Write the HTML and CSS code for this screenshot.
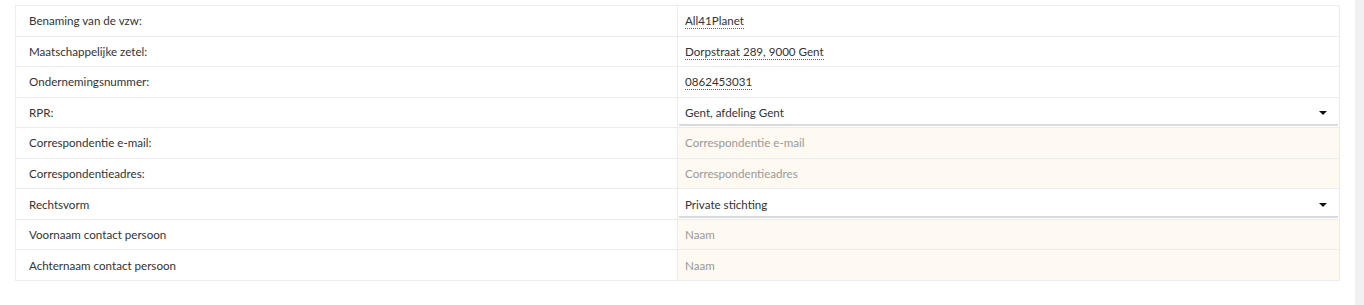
FILE: index.html
```html
<!DOCTYPE html>
<html lang="nl">
<head>
  <meta charset="UTF-8" />
  <meta name="viewport" content="width=device-width, initial-scale=1.0"/>
  <title>Gegevens vzw</title>
  <link rel="stylesheet" href="styles.css">
</head>
<body>

  <div class="page">
    <!-- Gegevens tabel -->
    <div class="content">
      <table class="info-table">
        <tr>
          <td class="label">Benaming van de vzw:</td>
          <td class="value"><span class="editable">All41Planet</span></td>
        </tr>
        <tr>
          <td class="label">Maatschappelijke zetel:</td>
          <td class="value"><span class="editable">Dorpstraat 289, 9000 Gent</span></td>
        </tr>
        <tr>
          <td class="label">Ondernemingsnummer:</td>
          <td class="value"><span class="editable">0862453031</span></td>
        </tr>
        <tr>
          <td class="label">RPR:</td>
          <td class="value select-cell">
            <div class="select-box">
              <span>Gent, afdeling Gent</span>
              <span class="caret"></span>
            </div>
          </td>
        </tr>
        <tr>
          <td class="label">Correspondentie e-mail:</td>
          <td class="value input-cell"><span class="placeholder">Correspondentie e-mail</span></td>
        </tr>
        <tr>
          <td class="label">Correspondentieadres:</td>
          <td class="value input-cell"><span class="placeholder">Correspondentieadres</span></td>
        </tr>
        <tr>
          <td class="label">Rechtsvorm</td>
          <td class="value select-cell">
            <div class="select-box">
              <span>Private stichting</span>
              <span class="caret"></span>
            </div>
          </td>
        </tr>
        <tr>
          <td class="label">Voornaam contact persoon</td>
          <td class="value input-cell"><span class="placeholder">Naam</span></td>
        </tr>
        <tr>
          <td class="label">Achternaam contact persoon</td>
          <td class="value input-cell"><span class="placeholder">Naam</span></td>
        </tr>
      </table>
    </div>

    <!-- scrollbalk -->
    <div class="scroll-track"></div>
  </div>

</body>
</html>
```

FILE: styles.css
```css
* {
  margin: 0;
  padding: 0;
  box-sizing: border-box;
}

body {
  background-color: #fff;
  font-family: 'Lato', 'Open Sans', sans-serif;
  font-size: 11.6px;
  color: #333;
  height: 305px;
  overflow: hidden;
}

.page {
  display: flex;
  height: 100%;
}

.content {
  flex: 1;
  padding: 5px 15px 0 15px;
}

.scroll-track {
  width: 9px;
  background-color: #f1f1f3;
}

.info-table {
  width: 100%;
  border-collapse: collapse;
  table-layout: fixed;
}

.info-table td {
  border: 1px solid #ececec;
  height: 30.56px;
  vertical-align: middle;
  line-height: 14px;
  padding-top: 1px;
}

.label {
  width: 50%;
  padding: 0 13px;
}

.value {
  padding: 0 7px;
}

.editable {
  padding-bottom: 1px;
  border-bottom: 1px dotted #666;
}

.input-cell {
  background-color: #fefaf1;
}

.placeholder {
  color: #999;
}

.select-cell {
  padding: 0 1px;
}

.select-box {
  display: flex;
  align-items: center;
  justify-content: space-between;
  height: 27px;
  padding: 2px 11px 0 6px;
  border-bottom: 2px solid #dadada;
}

.caret {
  width: 0;
  height: 0;
  border-left: 4px solid transparent;
  border-right: 4px solid transparent;
  border-top: 4px solid #111;
}
```
